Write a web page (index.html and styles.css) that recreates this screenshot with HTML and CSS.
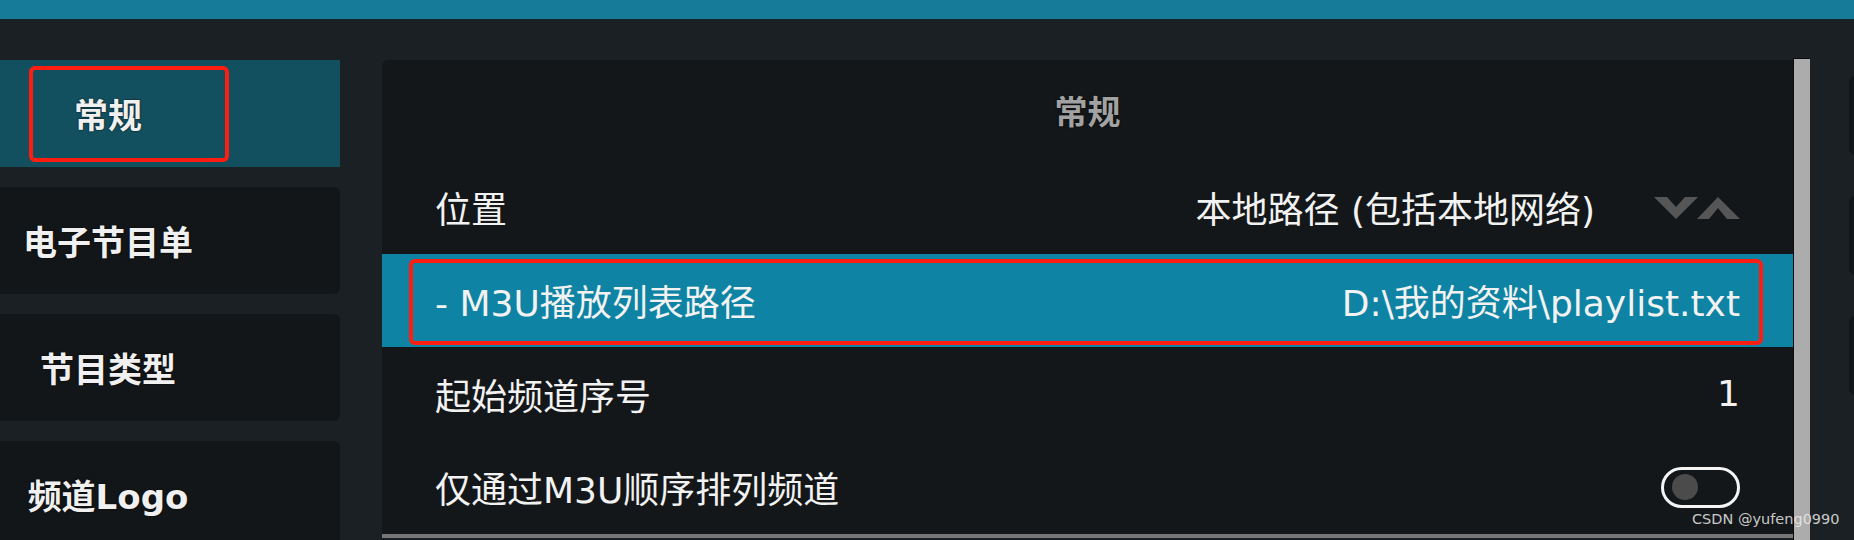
FILE: index.html
```html
<!DOCTYPE html>
<html lang="zh">
<head>
<meta charset="utf-8">
<title>常规</title>
<link rel="stylesheet" href="styles.css">
</head>
<body>
<div class="topbar"></div>
<div class="main">
  <nav class="sidebar">
    <div class="side-item active"><span class="label">常规</span><div class="annot annot-side"></div></div>
    <div class="side-item"><span class="label">电子节目单</span></div>
    <div class="side-item"><span class="label">节目类型</span></div>
    <div class="side-item"><span class="label">频道Logo</span></div>
  </nav>
  <section class="panel">
    <div class="panel-head">常规</div>
    <div class="row">
      <span class="row-label">位置</span>
      <div class="value-wrap">
        <span class="row-value">本地路径 (包括本地网络)</span>
        <svg class="spin" width="86" height="24" viewBox="0 0 86 24">
          <polygon points="0,1 13,1 22,11 31,1 44,1 22,23" fill="#565656"/>
          <polygon points="43,23 55,23 64,12 73,23 86,23 64,1" fill="#565656"/>
        </svg>
      </div>
    </div>
    <div class="row focus">
      <span class="row-label">- M3U播放列表路径</span>
      <span class="row-value">D:\我的资料\playlist.txt</span>
      <div class="annot annot-row"></div>
    </div>
    <div class="row">
      <span class="row-label">起始频道序号</span>
      <span class="row-value">1</span>
    </div>
    <div class="row">
      <span class="row-label">仅通过M3U顺序排列频道</span>
      <span class="toggle"><span class="knob"></span></span>
    </div>
    <div class="panel-foot"></div>
  </section>
  <div class="scrollbar"></div>
  <div class="rightstrip">
    <div class="ghost"></div>
    <div class="ghost"></div>
    <div class="ghost"></div>
  </div>
</div>
<div class="watermark">CSDN @yufeng0990</div>
</body>
</html>
```
FILE: styles.css
```css
html, body {
  margin: 0;
  padding: 0;
}
body {
  width: 1854px;
  height: 540px;
  overflow: hidden;
  background: #1a2023;
  font-family: "DejaVu Sans", "Noto Sans CJK SC", sans-serif;
  color: #f2f2f2;
  position: relative;
}
.topbar {
  height: 19px;
  background: #167b99;
  border-bottom: 1px solid #10272e;
}
.main {
  display: flex;
  align-items: flex-start;
  padding-top: 40px;
}
.sidebar {
  width: 340px;
  flex: none;
  display: flex;
  flex-direction: column;
  gap: 20px;
}
.side-item {
  position: relative;
  height: 107px;
  background: #131618;
  border-radius: 0 6px 6px 0;
  display: flex;
  align-items: center;
  justify-content: center;
  padding-right: 124px;
  font-family: "DejaVu Sans", "Noto Sans CJK SC", sans-serif;
  font-weight: bold;
  font-size: 34px;
  color: #f0f0f0;
  text-shadow: 0 0 2px #000;
}
.side-item.active {
  background: #13505f;
  border-radius: 0;
}
.annot {
  position: absolute;
  border: 4px solid #ff1d12;
  border-radius: 6px;
  box-sizing: border-box;
  pointer-events: none;
}
.annot-side {
  left: 29px;
  top: 6px;
  width: 200px;
  height: 96px;
}
.panel {
  width: 1411px;
  flex: none;
  margin-left: 42px;
  background: #141719;
  border-radius: 6px 0 0 0;
  display: flex;
  flex-direction: column;
}
.panel-head {
  height: 100px;
  display: flex;
  align-items: center;
  justify-content: center;
  font-weight: bold;
  font-size: 33px;
  color: #a2a2a2;
  text-shadow: 0 0 2px #000;
}
.row {
  position: relative;
  height: 93.5px;
  display: flex;
  align-items: center;
  justify-content: space-between;
  padding: 0 53px;
  font-size: 36px;
  color: #f2f2f2;
}
.row.focus {
  background: #0e83a3;
}
.annot-row {
  left: 27px;
  top: 5px;
  width: 1354px;
  height: 86px;
}
.value-wrap {
  display: flex;
  align-items: center;
  gap: 59px;
}
.spin {
  display: block;
  margin-top: 2px;
}
.toggle {
  width: 79px;
  height: 41px;
  box-sizing: border-box;
  border: 3px solid #f4f4f4;
  border-radius: 21px;
  display: flex;
  align-items: center;
  padding-left: 8px;
}
.knob {
  width: 26px;
  height: 26px;
  border-radius: 50%;
  background: #4b4b4b;
}
.panel-foot {
  height: 4px;
  background: #767676;
}
.scrollbar {
  flex: none;
  width: 16px;
  height: 484px;
  margin-top: -2px;
  background: #acacac;
  border-left: 1px solid #0c0c0c;
  border-top: 1px solid #0c0c0c;
}
.rightstrip {
  flex: 1;
  padding-left: 39px;
  padding-top: 16px;
  display: flex;
  flex-direction: column;
  gap: 41px;
}
.ghost {
  width: 40px;
  height: 79px;
  background: #131618;
  border-radius: 6px;
}
.watermark {
  position: absolute;
  left: 1692px;
  top: 511px;
  font-family: "DejaVu Sans", sans-serif;
  font-size: 14.5px;
  color: rgba(235, 235, 235, 0.85);
  white-space: nowrap;
}
```
